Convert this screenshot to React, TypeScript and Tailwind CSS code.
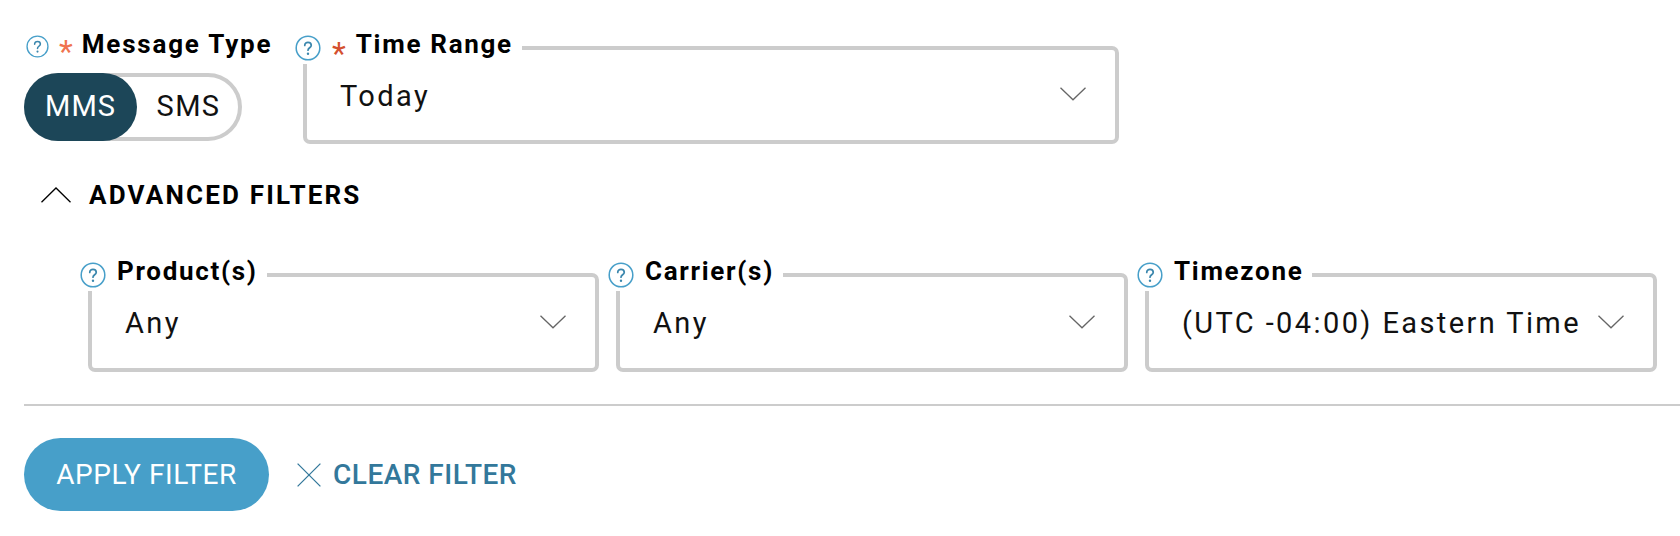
const font = { fontFamily: 'Roboto, "Noto Sans", sans-serif' };

function HelpIcon({ size = 24 }: { size?: number }) {
  return (
    <svg width={size} height={size} viewBox="0 0 24 24" fill="none" className="shrink-0">
      <circle cx="12" cy="12" r="10.9" stroke="#479fc9" strokeWidth="1.4" />
      <path
        d="M9 9.6c0-1.8 1.3-2.9 3-2.9s3 1.1 3 2.7c0 2.3-3 2.4-3 4.6"
        stroke="#3b87ad"
        strokeWidth="1.6"
        strokeLinecap="round"
      />
      <circle cx="12" cy="17.3" r="1.1" fill="#3b87ad" />
    </svg>
  );
}

function Caret() {
  return (
    <svg width="26" height="14" viewBox="0 0 26 14" fill="none" className="-mt-[2px] shrink-0">
      <path d="M0.5 0.7 13 12.8 25.5 0.7" stroke="#666666" strokeWidth="1.3" />
    </svg>
  );
}

function SelectField({
  label,
  value,
  required,
  className,
}: {
  label: string;
  value: string;
  required?: boolean;
  className: string;
}) {
  return (
    <div className={`relative rounded-[7px] border-[4px] border-[#cccccc] ${className}`}>
      <div className="absolute left-[-12px] top-[-18px] flex h-[32px] items-center bg-white pr-[9px]">
        <HelpIcon size={26} />
        {required && <span className="ml-[11px] mr-[10px] mt-[9px] text-[32px] leading-none text-[#d4502f]">*</span>}
        <span className={`-mt-[8px] text-[26px] font-bold tracking-[1.7px] text-black ${required ? "" : "ml-[11px]"}`}>{label}</span>
      </div>
      <div className="flex h-full items-center justify-between pl-[33px] pr-[29px]">
        <span className="mt-[3px] text-[29px] tracking-[2.4px] whitespace-nowrap text-[#111111]">{value}</span>
        <Caret />
      </div>
    </div>
  );
}

export default function App() {
  return (
    <div className="h-[536px] w-[1680px] overflow-hidden bg-white" style={font}>
      <div className="pl-[24px] pt-[29px]">
        <div className="flex items-start">
          <div className="w-[279px]">
            <div className="flex h-[34px] items-center pl-[2px]">
              <HelpIcon size={23} />
              <span className="ml-[10px] mr-[9px] mt-[9px] text-[32px] leading-none text-[#f0734f]">*</span>
              <span className="-mt-[4px] text-[26px] font-bold tracking-[1.8px] text-black">Message Type</span>
            </div>
            <div className="mt-[10px] flex h-[68px] w-[218px] items-center rounded-full border-[4px] border-[#cccccc]">
              <div className="-my-[4px] -ml-[4px] flex h-[68px] w-[113px] items-center justify-center rounded-full bg-[#1c4658] text-[29px] tracking-[1px] text-white">
                MMS
              </div>
              <div className="flex-1 pl-[2px] text-center text-[29px] tracking-[1.4px] text-[#111111]">SMS</div>
            </div>
          </div>
          <SelectField label="Time Range" value="Today" required className="mt-[17px] h-[98px] w-[816px]" />
        </div>

        <div className="mt-[31px] flex h-[40px] items-center">
          <svg width="30" height="16" viewBox="0 0 30 16" fill="none" className="ml-[17px] shrink-0">
            <path d="M0.5 15.3 15 1 29.5 15.3" stroke="#000000" strokeWidth="1.3" />
          </svg>
          <span className="ml-[18px] text-[26px] font-bold tracking-[2.2px] text-black">ADVANCED FILTERS</span>
        </div>

        <div className="mt-[58px] flex gap-[17px] pl-[64px]">
          <SelectField label="Product(s)" value="Any" className="h-[99px] w-[511px]" />
          <SelectField label="Carrier(s)" value="Any" className="h-[99px] w-[512px]" />
          <SelectField label="Timezone" value="(UTC -04:00) Eastern Time" className="h-[99px] w-[512px]" />
        </div>

        <div className="mt-[32px] h-[2px] bg-[#cccccc]" />

        <div className="mt-[32px] flex items-center">
          <button className="h-[73px] w-[245px] rounded-full bg-[#479fc9] text-[28px] tracking-[0.6px] text-white">
            APPLY FILTER
          </button>
          <button className="ml-[28px] flex items-center text-[28px] font-medium tracking-[0.5px] text-[#33789b]">
            <svg width="24" height="24" viewBox="0 0 24 24" fill="none" className="shrink-0">
              <path d="M0.6 0.6 23.4 23.4M23.4 0.6 0.6 23.4" stroke="#33789b" strokeWidth="1.3" />
            </svg>
            <span className="ml-[12px]">CLEAR FILTER</span>
          </button>
        </div>
      </div>
    </div>
  );
}
